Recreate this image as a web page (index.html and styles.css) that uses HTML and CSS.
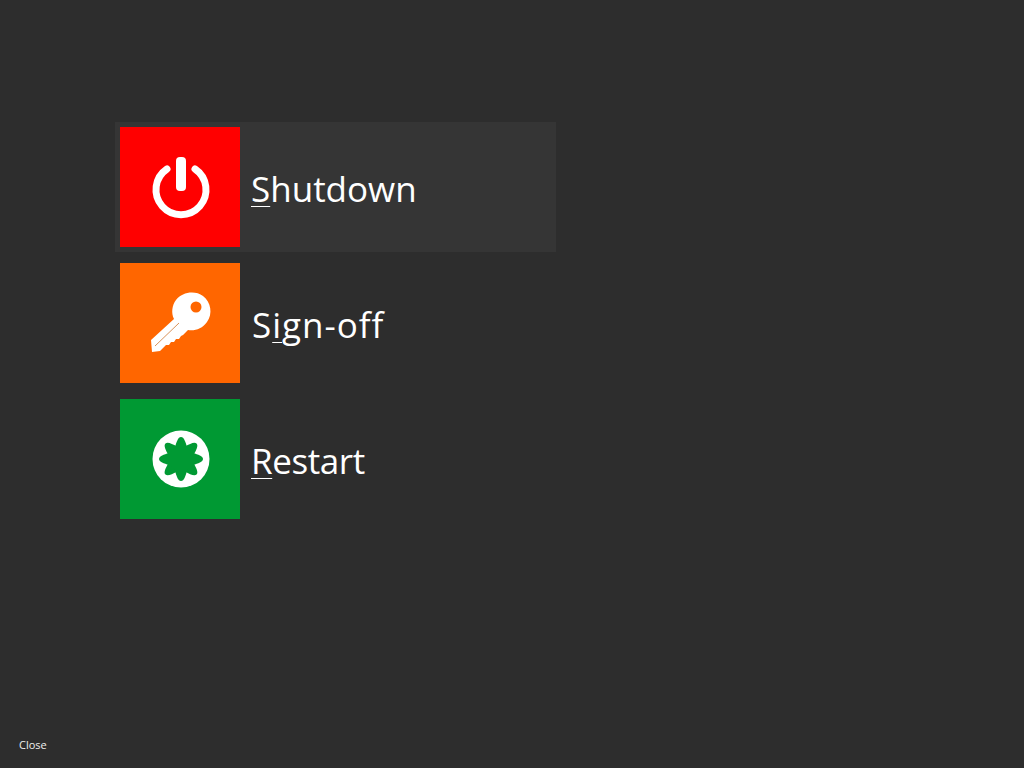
FILE: index.html
```html
<!DOCTYPE html>
<html lang="en">
<head>
<meta charset="UTF-8">
<title>Power options</title>
<link rel="stylesheet" href="styles.css">
</head>
<body>
<div class="menu">
  <div class="menu-item active">
    <div class="tile tile-red">
      <svg viewBox="0 0 120 120" width="120" height="120">
        <path d="M47 42 A25 25 0 1 0 75 42" fill="none" stroke="#fff" stroke-width="7" stroke-linecap="round"/>
        <rect x="56" y="30" width="10" height="34" rx="4" fill="#fff"/>
      </svg>
    </div>
    <span class="label"><u>S</u>hutdown</span>
  </div>
  <div class="menu-item">
    <div class="tile tile-orange">
      <svg viewBox="0 0 120 120" width="120" height="120">
        <path d="M31 77 L54 56 C51 50 52 42 56 37 C62 29 75 27 83 33 C91 39 93 51 87 59 C82 66 75 68 68 67 L63 72 L61 73 L59 76 L56 76 L54 79 L51 79 L49 82 L46 82 L40 88 L32 89 Z" fill="#fff"/>
        <circle cx="76" cy="44" r="5.5" fill="#f60"/>
        <path d="M35 83 L59 60" stroke="#d9935c" stroke-width="1" fill="none"/>
      </svg>
    </div>
    <span class="label label-wide">S<u>i</u>gn-off</span>
  </div>
  <div class="menu-item">
    <div class="tile tile-green">
      <svg viewBox="0 0 120 120" width="120" height="120">
        <circle cx="61" cy="60" r="28.5" fill="#fff"/>
        <g fill="#093">
          <circle cx="61" cy="60" r="14"/>
          <path id="petal" d="M55 48 C56.5 43 58 38 61 38 C64 38 65.5 43 67 48 Z"/>
          <use href="#petal" transform="rotate(45 61 60)"/>
          <use href="#petal" transform="rotate(90 61 60)"/>
          <use href="#petal" transform="rotate(135 61 60)"/>
          <use href="#petal" transform="rotate(180 61 60)"/>
          <use href="#petal" transform="rotate(225 61 60)"/>
          <use href="#petal" transform="rotate(270 61 60)"/>
          <use href="#petal" transform="rotate(315 61 60)"/>
        </g>
      </svg>
    </div>
    <span class="label label-tight"><u>R</u>estart</span>
  </div>
</div>
<div class="close-link">Close</div>
</body>
</html>
```

FILE: styles.css
```css
html, body {
  height: 100%;
}

body {
  margin: 0;
  background-color: #2d2d2d;
  color: #fff;
  font-family: "Open Sans", "Noto Sans", sans-serif;
  display: flex;
  flex-direction: column;
  justify-content: space-between;
  overflow: hidden;
}

.menu {
  display: flex;
  flex-direction: column;
  gap: 6px;
  width: 441px;
  margin: 122px 0 0 115px;
}

.menu-item {
  display: flex;
  align-items: center;
  gap: 11px;
  height: 130px;
  padding: 5px;
  box-sizing: border-box;
}

.menu-item.active {
  background-color: #353535;
}

.tile {
  width: 120px;
  height: 120px;
  flex-shrink: 0;
}

.tile svg {
  display: block;
}

.tile-red {
  background-color: #f00;
}

.tile-orange {
  background-color: #f60;
}

.tile-green {
  background-color: #093;
}

.label {
  font-size: 35px;
  line-height: 44px;
  margin-top: 3px;
}

.label u {
  text-decoration-thickness: 1px;
  text-underline-offset: 4px;
}

.label-wide {
  margin-left: 1px;
  letter-spacing: 1px;
}

.label-tight {
  letter-spacing: -0.4px;
}

.close-link {
  font-size: 11px;
  line-height: 14px;
  margin: 0 0 16px 19px;
  color: #eee;
}
```
